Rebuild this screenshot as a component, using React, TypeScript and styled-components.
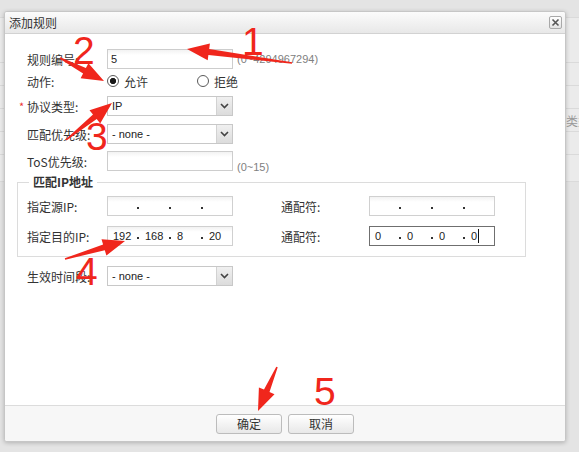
import React from "react";
import styled, { createGlobalStyle } from "styled-components";

const GlobalStyle = createGlobalStyle`
  html, body { margin: 0; padding: 0; background: #e4e4e4; }
  body {
    font-family: "Liberation Sans", "Noto Sans CJK SC", sans-serif;
    font-size: 12px;
    color: #333;
  }
`;

const Page = styled.div`
  position: relative;
  width: 579px;
  height: 452px;
  overflow: hidden;
  background: #e4e4e4;
  padding-top: 17px;
  box-sizing: border-box;
`;

const BgTable = styled.div`
  display: flex;
  flex-direction: column;
  background: #ebebeb;
  border-top: 1px solid #dadada;
`;

const BgRow = styled.div<{ $h: number }>`
  height: ${(p) => p.$h}px;
  box-sizing: border-box;
  border-bottom: 1px solid #dadada;
  display: flex;
  align-items: center;
  padding-left: 542px;
  color: #999;
  font-family: "Noto Sans CJK SC", sans-serif;
  font-size: 12px;
  white-space: nowrap;
`;

const Dialog = styled.div`
  position: absolute;
  left: 4px;
  top: 11px;
  width: 562px;
  height: 431px;
  box-sizing: border-box;
  border: 1px solid #c6c6c6;
  border-radius: 3px;
  background: #fff;
  box-shadow: 0 1px 4px rgba(0, 0, 0, 0.22);
  display: flex;
  flex-direction: column;
  overflow: hidden;
`;

const TitleBar = styled.div`
  height: 22px;
  flex: none;
  box-sizing: border-box;
  border-bottom: 1px solid #d2d2d2;
  background: linear-gradient(#fbfbfb, #e8e8e8);
  display: flex;
  align-items: center;
  justify-content: space-between;
  padding: 0 3px 0 4px;
`;

const Title = styled.span`
  font-family: "Noto Sans CJK SC", sans-serif;
  font-size: 12px;
  color: #333;
`;

const CloseBtn = styled.span`
  width: 13px;
  height: 13px;
  box-sizing: border-box;
  border: 1px solid #a9a9a9;
  border-radius: 2px;
  background: linear-gradient(#ffffff, #e2e2e2);
  display: flex;
  align-items: center;
  justify-content: center;
`;

const Body = styled.div`
  flex: 1;
  padding: 15px 0 0 12px;
  display: flex;
  flex-direction: column;
  align-items: flex-start;
`;

const Row = styled.div<{ $mt?: number; $indent?: number }>`
  display: flex;
  align-items: center;
  height: 20px;
  margin-top: ${(p) => p.$mt ?? 0}px;
  padding-left: ${(p) => p.$indent ?? 10}px;
`;

const Label = styled.span<{ $w?: number; $ml?: number; $required?: boolean }>`
  position: relative;
  flex: none;
  width: ${(p) => p.$w ?? 80}px;
  margin-left: ${(p) => p.$ml ?? 0}px;
  font-family: "Noto Sans CJK SC", sans-serif;
  font-size: 12px;
  color: #333;
  &::before {
    content: "*";
    display: ${(p) => (p.$required ? "block" : "none")};
    position: absolute;
    left: -8px;
    top: 0;
    color: #e33;
    font-size: 11px;
  }
`;

const TextInput = styled.input`
  width: 126px;
  height: 20px;
  box-sizing: border-box;
  border: 1px solid #cdcdcd;
  background: linear-gradient(#f2f2f2, #ffffff 5px);
  padding: 0 3px;
  margin: 0;
  font-family: "Liberation Sans", sans-serif;
  font-size: 11px;
  color: #222;
  outline: none;
`;

const Hint = styled.span<{ $low?: boolean }>`
  margin-left: 4px;
  font-family: "Liberation Sans", sans-serif;
  font-size: 11px;
  color: #808080;
  align-self: ${(p) => (p.$low ? "flex-end" : "center")};
  margin-bottom: ${(p) => (p.$low ? "-2px" : "0")};
`;

const RadioOption = styled.label`
  display: flex;
  align-items: center;
  gap: 5px;
  width: 90px;
  font-family: "Noto Sans CJK SC", sans-serif;
  font-size: 12px;
  color: #333;
`;

const Radio = styled.span<{ $checked?: boolean }>`
  width: 12px;
  height: 12px;
  flex: none;
  box-sizing: border-box;
  border-radius: 50%;
  border: 1px solid #5a5a5a;
  background: ${(p) =>
    p.$checked
      ? "radial-gradient(circle, #1a1a1a 0 2.8px, #ffffff 3.4px)"
      : "#fff"};
`;

const SelectBox = styled.div`
  width: 126px;
  height: 20px;
  box-sizing: border-box;
  border: 1px solid #c8c8c8;
  background: #fff;
  display: flex;
`;

const SelectValue = styled.span`
  flex: 1;
  padding-left: 4px;
  font-family: "Liberation Sans", sans-serif;
  font-size: 11px;
  line-height: 18px;
  color: #222;
`;

const SelectBtn = styled.span`
  width: 15px;
  flex: none;
  border-left: 1px solid #d2d2d2;
  background: linear-gradient(#f0f0f0, #dcdcdc);
  display: flex;
  align-items: center;
  justify-content: center;
`;

const Group = styled.fieldset`
  margin: 4px 0 0 0;
  width: 509px;
  box-sizing: border-box;
  border: 1px solid #dcdcdc;
  padding: 7px 0 10px 9px;
  min-inline-size: auto;
`;

const GroupLegend = styled.legend`
  margin-left: 2px;
  padding: 0 4px;
  font-family: "Noto Sans CJK SC", sans-serif;
  font-weight: bold;
  font-size: 12px;
  line-height: 14px;
  color: #333;
`;

const IpBox = styled.div<{ $focus?: boolean }>`
  width: 126px;
  height: 20px;
  box-sizing: border-box;
  border: 1px solid ${(p) => (p.$focus ? "#6f6f6f" : "#d0d0d0")};
  background: ${(p) => (p.$focus ? "#fff" : "linear-gradient(#f2f2f2, #ffffff 5px)")};
  display: flex;
  align-items: center;
`;

const Octet = styled.span`
  width: 28px;
  box-sizing: border-box;
  padding-left: 5px;
  font-family: "Liberation Sans", sans-serif;
  font-size: 11px;
  color: #222;
  display: flex;
  align-items: center;
`;

const Dot = styled.span`
  width: 4px;
  display: flex;
  justify-content: center;
  margin-top: 4px;
  &::after {
    content: "";
    width: 2px;
    height: 2px;
    background: #333;
  }
`;

const Caret = styled.span`
  width: 1px;
  height: 14px;
  background: #111;
  margin-left: 1px;
`;

const Footer = styled.div`
  height: 36px;
  flex: none;
  box-sizing: border-box;
  border-top: 1px solid #dcdcdc;
  background: #f7f7f7;
  display: flex;
  justify-content: center;
  gap: 6px;
  padding-top: 8px;
`;

const Button = styled.button`
  width: 66px;
  height: 20px;
  box-sizing: border-box;
  border: 1px solid #bcbcbc;
  border-radius: 3px;
  background: linear-gradient(#ffffff, #e8e8e8);
  font-family: "Noto Sans CJK SC", sans-serif;
  font-size: 12px;
  line-height: 18px;
  color: #333;
  padding: 0;
`;

const Overlay = styled.svg`
  position: absolute;
  left: 0;
  top: 0;
  pointer-events: none;
`;

const Chevron = () => (
  <svg width="9" height="6" viewBox="0 0 9 6">
    <path d="M1 1 L4.5 4.5 L8 1" fill="none" stroke="#444" strokeWidth="1.6" />
  </svg>
);

const Select = ({ value }: { value: string }) => (
  <SelectBox>
    <SelectValue>{value}</SelectValue>
    <SelectBtn>
      <Chevron />
    </SelectBtn>
  </SelectBox>
);

const IpField = ({ parts, focus }: { parts: string[]; focus?: boolean }) => (
  <IpBox $focus={focus}>
    {parts.map((p, i) => (
      <React.Fragment key={i}>
        {i > 0 && <Dot />}
        <Octet>
          {p}
          {focus && i === 3 && <Caret />}
        </Octet>
      </React.Fragment>
    ))}
  </IpBox>
);

type Pt = [number, number];

function arrowPoints(tail: Pt, tip: Pt, headLen: number, headW: number, shaftW: number, tailW: number) {
  const dx = tip[0] - tail[0];
  const dy = tip[1] - tail[1];
  const len = Math.hypot(dx, dy);
  const ux = dx / len;
  const uy = dy / len;
  const nx = -uy;
  const ny = ux;
  const bx = tip[0] - ux * headLen;
  const by = tip[1] - uy * headLen;
  const pts: Pt[] = [
    [tail[0] + (nx * tailW) / 2, tail[1] + (ny * tailW) / 2],
    [bx + (nx * shaftW) / 2, by + (ny * shaftW) / 2],
    [bx + (nx * headW) / 2, by + (ny * headW) / 2],
    tip,
    [bx - (nx * headW) / 2, by - (ny * headW) / 2],
    [bx - (nx * shaftW) / 2, by - (ny * shaftW) / 2],
    [tail[0] - (nx * tailW) / 2, tail[1] - (ny * tailW) / 2],
  ];
  return pts.map((p) => `${p[0].toFixed(1)},${p[1].toFixed(1)}`).join(" ");
}

const arrows: { tail: Pt; tip: Pt }[] = [
  { tail: [292, 63], tip: [187, 49] },
  { tail: [60, 58], tip: [104, 81] },
  { tail: [66, 140], tip: [112, 103] },
  { tail: [65, 259], tip: [125, 241] },
  { tail: [277, 367], tip: [258, 411] },
];

const numbers: { t: string; x: number; y: number }[] = [
  { t: "1", x: 242, y: 55 },
  { t: "2", x: 73, y: 64 },
  { t: "3", x: 86, y: 150 },
  { t: "4", x: 76, y: 285 },
  { t: "5", x: 314, y: 405 },
];

export default function App() {
  return (
    <>
      <GlobalStyle />
      <Page>
        <BgTable>
          <BgRow $h={45} />
          <BgRow $h={23} />
          <BgRow $h={23} />
          <BgRow $h={23}>协议类型</BgRow>
          <BgRow $h={23} />
          <BgRow $h={27} />
        </BgTable>

        <Dialog>
          <TitleBar>
            <Title>添加规则</Title>
            <CloseBtn>
              <svg width="9" height="9" viewBox="0 0 9 9">
                <path d="M1.5 1.5 L7.5 7.5 M7.5 1.5 L1.5 7.5" stroke="#555" strokeWidth="1.6" />
              </svg>
            </CloseBtn>
          </TitleBar>

          <Body>
            <Row>
              <Label>规则编号:</Label>
              <TextInput readOnly value="5" />
              <Hint>(0~4294967294)</Hint>
            </Row>
            <Row $mt={2}>
              <Label>动作:</Label>
              <RadioOption>
                <Radio $checked />
                允许
              </RadioOption>
              <RadioOption>
                <Radio />
                拒绝
              </RadioOption>
            </Row>
            <Row $mt={5}>
              <Label $required>协议类型:</Label>
              <Select value="IP" />
            </Row>
            <Row $mt={8}>
              <Label>匹配优先级:</Label>
              <Select value="- none -" />
            </Row>
            <Row $mt={7}>
              <Label>ToS优先级:</Label>
              <TextInput readOnly value="" />
              <Hint $low>(0~15)</Hint>
            </Row>

            <Group>
              <GroupLegend>匹配IP地址</GroupLegend>
              <Row $indent={0}>
                <Label>指定源IP:</Label>
                <IpField parts={["", "", "", ""]} />
                <Label $ml={48} $w={88}>
                  通配符:
                </Label>
                <IpField parts={["", "", "", ""]} />
              </Row>
              <Row $indent={0} $mt={10}>
                <Label>指定目的IP:</Label>
                <IpField parts={["192", "168", "8", "20"]} />
                <Label $ml={48} $w={88}>
                  通配符:
                </Label>
                <IpField parts={["0", "0", "0", "0"]} focus />
              </Row>
            </Group>

            <Row $mt={9}>
              <Label>生效时间段:</Label>
              <Select value="- none -" />
            </Row>
          </Body>

          <Footer>
            <Button>确定</Button>
            <Button>取消</Button>
          </Footer>
        </Dialog>

        <Overlay width="579" height="452" viewBox="0 0 579 452">
          {arrows.map((a, i) => (
            <polygon key={i} points={arrowPoints(a.tail, a.tip, 22, 17, 6, 1.5)} fill="#f0261c" />
          ))}
          {numbers.map((n) => (
            <text
              key={n.t}
              x={n.x}
              y={n.y}
              fill="#f0261c"
              fontFamily="'Liberation Sans', sans-serif"
              fontSize="39"
            >
              {n.t}
            </text>
          ))}
        </Overlay>
      </Page>
    </>
  );
}
